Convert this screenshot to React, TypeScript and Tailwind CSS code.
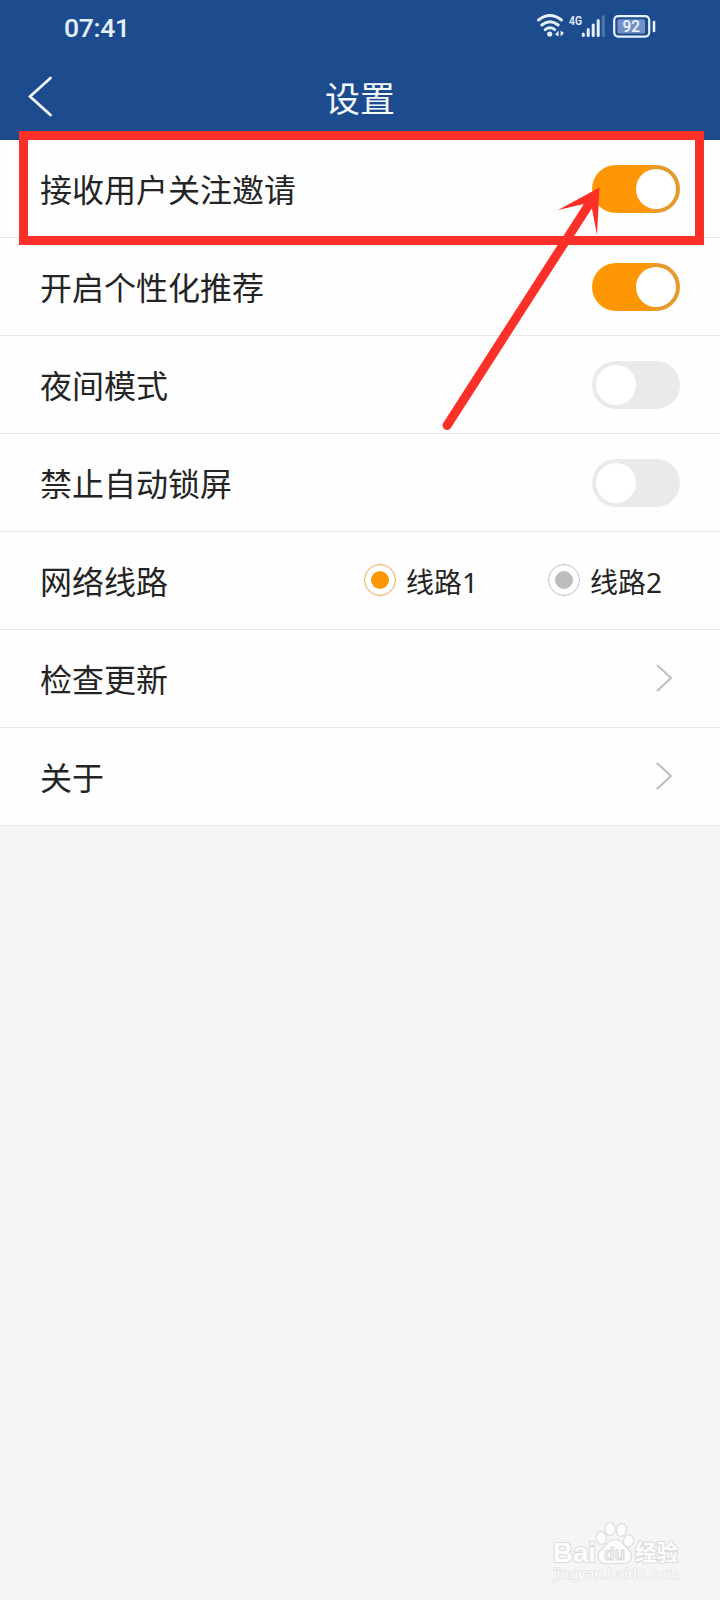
import type { ReactNode } from 'react';

function Toggle({ on }: { on: boolean }) {
  return (
    <span
      role="switch"
      aria-checked={on}
      className={
        on
          ? 'flex h-12 w-[88px] items-center justify-end rounded-full bg-linear-to-r from-[#ff9705] from-60% to-[#e59b2c] to-75% px-1'
          : 'flex h-12 w-[88px] items-center justify-start rounded-full bg-[#eaeaea] px-1'
      }
    >
      <span className="size-10 rounded-full bg-white" />
    </span>
  );
}

function Radio({ label, on }: { label: string; on: boolean }) {
  return (
    <span className="flex w-[184px] items-center">
      <span
        className={
          on
            ? 'mb-px flex size-8 items-center justify-center rounded-full border border-[#e3a94c]'
            : 'mb-px flex size-8 items-center justify-center rounded-full border border-[#c4c4c4]'
        }
      >
        <span className={on ? 'size-[18px] rounded-full bg-[#ff9705]' : 'size-[18px] rounded-full bg-[#bdbdbd]'} />
      </span>
      <span className="ml-[10px] mt-[2px] font-['Noto_Sans','Noto_Sans_CJK_SC',sans-serif] text-[28px] leading-8">{label}</span>
    </span>
  );
}

function Chevron() {
  return (
    <svg className="mb-px mr-2 h-[28px] w-[16px]" viewBox="0 0 16 28" fill="none">
      <path d="M1.5 1.5 L15 14 L1.5 26.5" stroke="#bebebe" strokeWidth="2" strokeLinecap="round" />
    </svg>
  );
}

function Row({ label, children }: { label: string; children: ReactNode }) {
  return (
    <div className="flex h-[98px] items-center justify-between border-b border-[#e6e6e6] bg-[#fefefe] px-10">
      <span className="mb-px text-[32px] leading-[40px]">{label}</span>
      {children}
    </div>
  );
}

function StatusIcons() {
  return (
    <svg className="mr-[62px] h-[60px] w-[138px]" viewBox="520 0 138 60" fill="none">
      <g stroke="#e6f1ff" strokeWidth="2.9" strokeLinecap="round">
        <path d="M538.5 20 Q550 11 561.5 20" />
        <path d="M541.8 25 Q550 18.5 558.2 25" />
        <path d="M545.2 29.6 Q550 26 554.8 29.6" />
      </g>
      <circle cx="549.7" cy="34" r="2.6" fill="#e6f1ff" />
      <path d="M558.6 30.5 V36.5 L555 34.5 Z M560.6 30.5 V36.5 L564 33 Z" fill="#e6f1ff" />
      <text x="569" y="24.5" fill="#e6f1ff" fontFamily="Roboto, sans-serif" fontWeight="600" fontSize="13.5" textLength="13" lengthAdjust="spacingAndGlyphs">4G</text>
      <g strokeWidth="3" strokeLinecap="round" stroke="#e6f1ff">
        <path d="M583.3 34 V35.5 M588.2 29.5 V35.5 M593.2 25 V35.5 M598.2 20.5 V35.5" />
        <path d="M603.3 16.5 V35.5" stroke="#5078ae" />
      </g>
      <rect x="614.2" y="16.2" width="35" height="20.4" rx="4" stroke="#e6f1ff" strokeWidth="2.2" />
      <rect x="617.5" y="19.3" width="27.5" height="14.2" rx="1.5" fill="#7391c6" />
      <path d="M654 22 V31" stroke="#e6f1ff" strokeWidth="2.6" strokeLinecap="round" />
      <text x="622.5" y="32.4" fill="#f0f6ff" fontFamily="Roboto, sans-serif" fontWeight="500" fontSize="16.5" textLength="17.5" lengthAdjust="spacingAndGlyphs">92</text>
    </svg>
  );
}

function Header() {
  return (
    <header className="h-[140px] bg-[#1c4b8e] text-[#f4f9ff]">
      <div className="flex h-[60px] items-start justify-between">
        <span className="ml-[64px] mt-[10px] font-[Roboto,sans-serif] text-[26.5px] font-medium leading-9 tracking-[-0.3px] text-[#e6f1ff]">07:41</span>
        <StatusIcons />
      </div>
      <div className="grid h-20 grid-cols-[120px_1fr_120px] items-center">
        <svg className="mb-[8px] ml-7 h-[42px] w-[26px]" viewBox="0 0 26 42" fill="none">
          <path d="M22.5 3 L2 21.5 L22.5 40" stroke="currentColor" strokeWidth="2.8" strokeLinecap="round" />
        </svg>
        <h1 className="mb-[6px] text-center text-[35px] leading-10">设置</h1>
      </div>
    </header>
  );
}

function Annotation() {
  return (
    <svg className="pointer-events-none absolute left-0 top-0 h-[440px] w-[720px]" viewBox="0 0 720 440" fill="none">
      <rect x="23.5" y="135.5" width="676" height="105" stroke="#fa3029" strokeWidth="9" />
      <path d="M447 425.5 L588 206" stroke="#fa3029" strokeWidth="9" strokeLinecap="round" />
      <path d="M599.5 187.5 L558 210 L584 204 L592 209 L597 235 Z" fill="#fa3029" />
    </svg>
  );
}

function Watermark() {
  return (
    <svg className="absolute left-[545px] top-[1515px] h-[75px] w-[150px]" viewBox="545 1515 150 75">
      <g fill="#fdfdfd" stroke="#dcdcdc" strokeWidth="1.2" strokeLinejoin="round">
        <g fontWeight="700" paintOrder="stroke" strokeWidth="2.2">
          <text x="553" y="1562" fontSize="28.5" fontFamily="'Liberation Sans', sans-serif" textLength="43" lengthAdjust="spacingAndGlyphs">Bai</text>
          <text x="635" y="1560" fontSize="22" fontFamily="'Noto Sans CJK SC', sans-serif" textLength="43" lengthAdjust="spacingAndGlyphs">经验</text>
        </g>
        <ellipse cx="601.3" cy="1538" rx="5" ry="6.5" transform="rotate(-12 601.3 1538)" />
        <ellipse cx="610" cy="1529" rx="5" ry="6.6" />
        <ellipse cx="621.5" cy="1530" rx="5" ry="6.6" transform="rotate(12 621.5 1530)" />
        <ellipse cx="628.5" cy="1541" rx="5" ry="6.3" transform="rotate(12 628.5 1541)" />
        <path d="M615 1539.5 C608 1539.5 607 1545 602 1549 C596 1553 597 1563.5 606 1563.5 H624 C633 1563.5 633 1553 628 1549 C623 1545 622 1539.5 615 1539.5 Z" />
        <text x="604" y="1559.5" fontSize="18" fill="#f3f3f3" stroke="#d8d8d8" strokeWidth="1" fontFamily="'Liberation Sans', sans-serif" fontWeight="700" textLength="21" lengthAdjust="spacingAndGlyphs">du</text>
      </g>
      <text x="553.5" y="1579" fontSize="14.5" fill="#fcfcfc" stroke="#e4e4e4" strokeWidth="1.4" paintOrder="stroke" fontFamily="'Liberation Sans', sans-serif" textLength="126" lengthAdjust="spacingAndGlyphs">jingyan.baidu.com</text>
    </svg>
  );
}

export default function App() {
  return (
    <div className="relative h-[1600px] w-[720px] overflow-hidden bg-[#f5f5f5] font-['Noto_Sans_CJK_SC',sans-serif] text-[#242424]">
      <Header />
      <main>
        <Row label="接收用户关注邀请"><Toggle on /></Row>
        <Row label="开启个性化推荐"><Toggle on /></Row>
        <Row label="夜间模式"><Toggle on={false} /></Row>
        <Row label="禁止自动锁屏"><Toggle on={false} /></Row>
        <Row label="网络线路">
          <span className="-mr-3 flex">
            <Radio label="线路1" on />
            <span className="-mr-10"><Radio label="线路2" on={false} /></span>
          </span>
        </Row>
        <Row label="检查更新"><Chevron /></Row>
        <Row label="关于"><Chevron /></Row>
      </main>
      <Annotation />
      <Watermark />
    </div>
  );
}
